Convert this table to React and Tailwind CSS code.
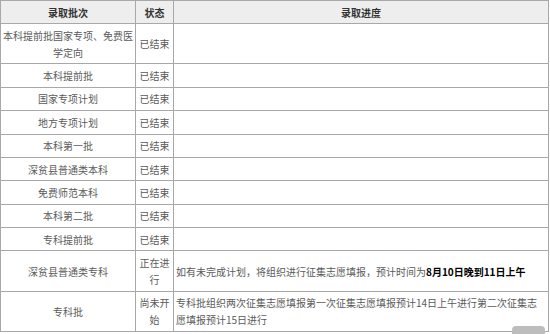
const rows = [
  { name: '本科提前批国家专项、免费医学定向', status: '已结束', progress: null },
  { name: '本科提前批', status: '已结束', progress: null },
  { name: '国家专项计划', status: '已结束', progress: null },
  { name: '地方专项计划', status: '已结束', progress: null },
  { name: '本科第一批', status: '已结束', progress: null },
  { name: '深贫县普通类本科', status: '已结束', progress: null },
  { name: '免费师范本科', status: '已结束', progress: null },
  { name: '本科第二批', status: '已结束', progress: null },
  { name: '专科提前批', status: '已结束', progress: null },
  {
    name: '深贫县普通类专科',
    status: '正在进行',
    progress: (
      <>
        如有未完成计划，将组织进行征集志愿填报，预计时间为
        <b className="font-bold text-black">8月10日晚到11日上午</b>
      </>
    ),
  },
  {
    name: '专科批',
    status: '尚未开始',
    progress: '专科批组织两次征集志愿填报第一次征集志愿填报预计14日上午进行第二次征集志愿填报预计15日进行',
  },
];

export default function App() {
  return (
    <div
      className="relative w-[550px] h-[334px] overflow-hidden bg-white"
      style={{ fontFamily: '"Microsoft YaHei", "Noto Sans CJK SC", sans-serif' }}
    >
      <table className="w-[549px] table-fixed border-collapse text-[10px] leading-[17px] text-[#5a5a5a]">
        <colgroup>
          <col className="w-[135px]" />
          <col className="w-[38px]" />
          <col />
        </colgroup>
        <thead>
          <tr className="bg-[#eeeeee] text-[#333] font-bold">
            <th className="border border-[#a8a8a8] px-[2px] py-[2px] h-[23px]">录取批次</th>
            <th className="border border-[#a8a8a8] px-[2px] py-[2px]">状态</th>
            <th className="border border-[#a8a8a8] px-[2px] py-[2px]">录取进度</th>
          </tr>
        </thead>
        <tbody>
          {rows.map((r) => (
            <tr key={r.name}>
              <td className="border border-[#a8a8a8] px-[2px] py-[2.7px] text-center align-middle">{r.name}</td>
              <td className="border border-[#a8a8a8] px-[2px] py-[2.7px] text-center align-middle">{r.status}</td>
              <td className="border border-[#a8a8a8] px-[2px] py-[2.7px] text-left align-middle">{r.progress}</td>
            </tr>
          ))}
        </tbody>
      </table>
      <div className="absolute left-[512px] top-[326px] w-[33px] h-[20px] rounded-[4px] bg-[#bdbdbd]" />
    </div>
  );
}
